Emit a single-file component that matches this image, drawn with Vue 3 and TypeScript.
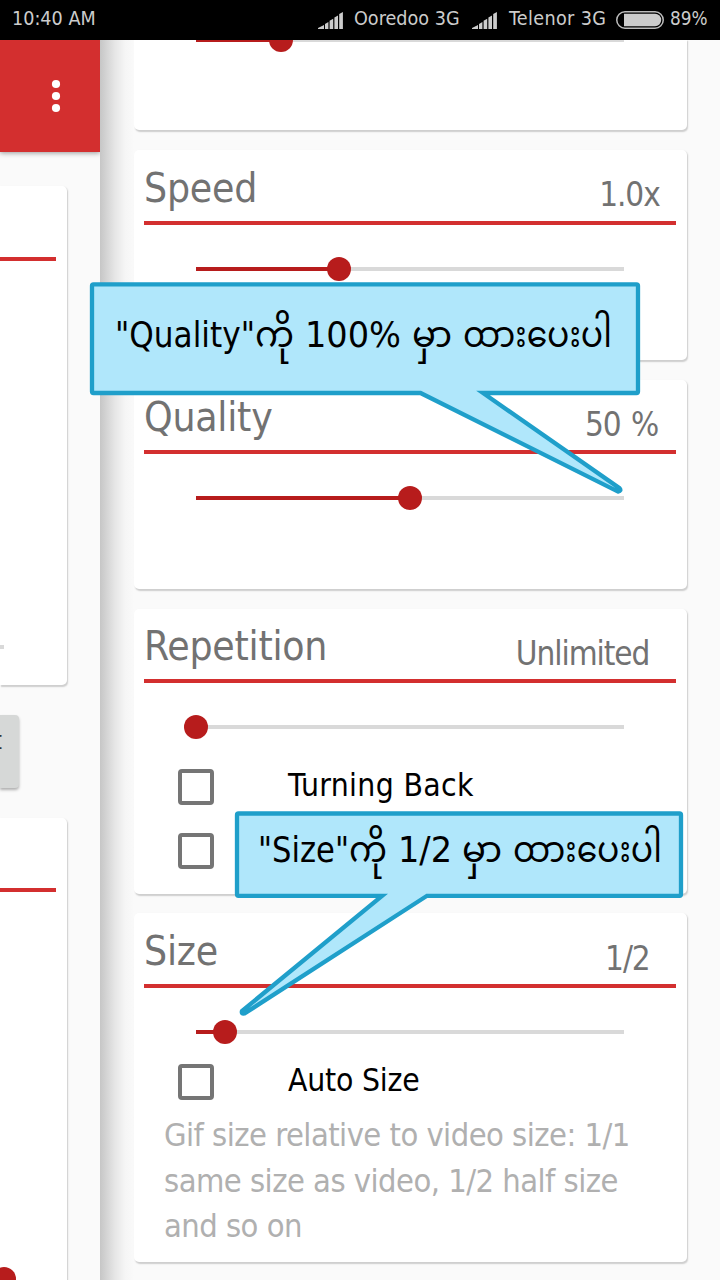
<script setup lang="ts">
interface CheckOption {
  label: string
  tracking: number
}
interface SettingCard {
  title: string
  value: string
  inset: number
  progress: number
  kind: string
  options: CheckOption[]
  hint?: string
}
interface Run {
  text: string
  x: number
  width: number
}
interface Callout {
  name: string
  path: string
  baseline: number
  runs: Run[]
}

const signalBars =
  'M0 17V16L6 13V17zM7 17V11.9L10.4 10.1V17zM11.6 17V8.8L15.2 6.8V17zM16.4 17V5.6L20 3.4V17zM21.2 17V2L24.9 0V17z'

const cards: SettingCard[] = [
  { title: 'Speed', value: '1.0x', inset: 16, progress: 142.5, kind: 'plain', options: [] },
  { title: 'Quality', value: '50 %', inset: 17.5, progress: 214, kind: 'plain', options: [] },
  {
    title: 'Repetition', value: 'Unlimited', inset: 26.3, progress: 0, kind: 'repeat',
    options: [{ label: 'Turning Back', tracking: 0.35 }, { label: '', tracking: 0 }],
  },
  {
    title: 'Size', value: '1/2', inset: 26, progress: 28.5, kind: 'size',
    options: [{ label: 'Auto Size', tracking: -0.2 }],
    hint: 'Gif size relative to video size: 1/1 same size as video, 1/2 half size and so on',
  },
]

const callouts: Callout[] = [
  {
    name: 'quality',
    path: 'M93.5 284.3H636.5Q638 284.3 638 285.8V391.5Q638 393 636.5 393H483L619.5 488.2Q621.8 490.8 618 491.6L420.5 393H93.5Q92 393 92 391.5V285.8Q92 284.3 93.5 284.3Z',
    baseline: 346.5,
    runs: [
      { text: '"Quality"', x: 115, width: 140 },
      { text: 'ကို', x: 255, width: 39 },
      { text: '100%', x: 305, width: 96 },
      { text: 'မှာ', x: 412, width: 40 },
      { text: 'ထားပေးပါ', x: 463, width: 149 },
    ],
  },
  {
    name: 'size',
    path: 'M238.5 813.5H679.5Q681 813.5 681 815V894.3Q681 895.8 679.5 895.8H427L244.5 1013.5Q241 1014.2 242 1011L382 895.8H238.5Q237 895.8 237 894.3V815Q237 813.5 238.5 813.5Z',
    baseline: 861.7,
    runs: [
      { text: '"Size"', x: 258, width: 91 },
      { text: 'ကို', x: 349, width: 38 },
      { text: '1/2', x: 398, width: 54 },
      { text: 'မှာ', x: 462, width: 40 },
      { text: 'ထားပေးပါ', x: 513, width: 149 },
    ],
  },
]
</script>

<template>
  <div class="screen">
    <header class="status">
      <span class="clock">10:40 AM</span>
      <svg class="signal" width="25" height="17" viewBox="0 0 25 17">
        <path :d="signalBars" fill="#ccc" />
      </svg>
      <span class="carrier first">Ooredoo 3G</span>
      <svg class="signal" width="25" height="17" viewBox="0 0 25 17">
        <path :d="signalBars" fill="#ccc" />
      </svg>
      <span class="carrier second">Telenor 3G</span>
      <svg class="battery" width="48" height="18" viewBox="0 0 48 18">
        <rect x=".75" y=".75" width="46.5" height="16.5" rx="8.25" fill="none" stroke="#bbb" stroke-width="1.5" />
        <path d="M8 2.8H39a6.2 6.2 0 0 1 0 12.4H8z" fill="#ccc" />
      </svg>
      <span class="percent">89%</span>
    </header>

    <div class="body">
      <aside class="page">
        <div class="toolbar">
          <svg width="10" height="34" viewBox="0 0 10 34">
            <circle cx="5" cy="5" r="4.1" fill="#fff" />
            <circle cx="5" cy="17" r="4.1" fill="#fff" />
            <circle cx="5" cy="29" r="4.1" fill="#fff" />
          </svg>
        </div>
        <div class="side-card upper">
          <div class="side-rule"></div>
          <div class="side-track"></div>
        </div>
        <div class="side-button"><span>t</span></div>
        <div class="side-card lower">
          <div class="side-rule"></div>
          <div class="side-thumb"></div>
        </div>
      </aside>

      <main class="drawer">
        <section class="card partial">
          <div class="slider">
            <div class="fill" :style="{ width: '85px' }"></div>
            <div class="thumb"></div>
          </div>
        </section>
        <section v-for="card in cards" :key="card.title" class="card" :class="card.kind">
          <div class="heading" :style="{ paddingRight: card.inset + 'px' }">
            <h2>{{ card.title }}</h2>
            <span class="value">{{ card.value }}</span>
          </div>
          <div class="rule"></div>
          <div class="slider">
            <div class="fill" :style="{ width: card.progress + 'px' }"></div>
            <div class="thumb"></div>
          </div>
          <div v-if="card.options.length" class="options">
            <label v-for="(option, i) in card.options" :key="i" class="option">
              <span class="box"></span>
              <span class="name" :style="{ letterSpacing: option.tracking + 'px' }">{{ option.label }}</span>
            </label>
          </div>
          <p v-if="card.hint" class="hint">{{ card.hint }}</p>
        </section>
      </main>
    </div>

    <svg class="callouts" width="720" height="1280" viewBox="0 0 720 1280">
      <g v-for="c in callouts" :key="c.name">
        <path :d="c.path" fill="#b0e7fb" stroke="#1f9fca" stroke-width="4.3" stroke-linejoin="miter" />
        <text
          v-for="run in c.runs"
          :key="run.x"
          :x="run.x"
          :y="c.baseline"
          :textLength="run.width"
          lengthAdjust="spacingAndGlyphs"
        >{{ run.text }}</text>
      </g>
    </svg>
  </div>
</template>

<style>
body {
  margin: 0;
  background: #fafafa;
}
</style>

<style scoped>
.screen {
  position: relative;
  width: 720px;
  height: 1280px;
  overflow: hidden;
  background: #fafafa;
  font-family: "DejaVu Sans Condensed", "DejaVu Sans", "Noto Sans Myanmar", "Noto Sans", sans-serif;
  font-stretch: condensed;
  display: flex;
  flex-direction: column;
}
.status {
  height: 40px;
  flex: none;
  background: #000;
  color: #ccc;
  font-size: 19.6px;
  line-height: 37px;
  display: flex;
  white-space: nowrap;
}
.clock {
  padding-left: 12px;
  width: 306px;
  flex: none;
}
.signal {
  margin-top: 12px;
  flex: none;
}
.carrier {
  padding-left: 11px;
  flex: none;
}
.first {
  width: 118px;
}
.second {
  padding-left: 12px;
  width: 107px;
  letter-spacing: 0.35px;
}
.battery {
  flex: none;
  margin: 11px 6px 0 0;
}
.percent {
  font-size: 18.8px;
}
.body {
  flex: 1;
  min-height: 0;
  display: flex;
}
.page {
  width: 100px;
  flex: none;
  overflow: hidden;
}
.toolbar {
  height: 112px;
  background: #d32f2f;
  box-shadow: 0 1px 5px rgba(0, 0, 0, 0.4);
  display: flex;
  align-items: center;
  justify-content: flex-end;
  padding-right: 39px;
}
.side-card {
  width: 66.5px;
  background: #fff;
  border-radius: 0 5px 5px 0;
  box-shadow: 1px 1.5px 1.5px rgba(0, 0, 0, 0.18);
}
.upper {
  height: 499px;
  margin-top: 34px;
  padding-top: 71px;
  box-sizing: border-box;
}
.side-rule {
  width: 56px;
  height: 4px;
  background: #d32f2f;
}
.side-track {
  width: 4px;
  height: 4px;
  margin-top: 384px;
  background: #d9d9d9;
}
.side-button {
  width: 18.5px;
  height: 72.5px;
  margin: 30px 0 30.5px;
  background: #d6d8d7;
  border-radius: 0 4px 4px 0;
  box-shadow: 0 2px 3px rgba(0, 0, 0, 0.3);
  font-size: 24px;
  line-height: 52px;
  color: #333;
}
.side-button span {
  margin-left: -6.5px;
}
.lower {
  height: 480px;
  padding-top: 70px;
}
.side-thumb {
  width: 24px;
  height: 24px;
  border-radius: 50%;
  background: #b71c1c;
  margin: 375px 0 0 -8px;
}
.drawer {
  width: 620px;
  box-sizing: border-box;
  padding-left: 34px;
  background: linear-gradient(to right, #c6c6c6 0, #d3d3d3 6px, #e6e6e6 15px, #f5f5f5 25px, #fafafa 34px);
}
.card {
  width: 552.7px;
  height: 209.7px;
  margin-bottom: 19.6px;
  box-sizing: border-box;
  background: #fff;
  border-radius: 5px;
  box-shadow: 1px 1.5px 1.5px rgba(0, 0, 0, 0.18);
}
.card.partial {
  height: 90px;
  margin-bottom: 20.3px;
  border-radius: 0 0 5px 5px;
  display: flow-root;
  clip-path: inset(0 -4px -4px 0);
}
.partial .slider {
  margin-top: -12.5px;
}
.card.repeat {
  height: 284.9px;
}
.card.size {
  height: 348.5px;
}
.heading {
  height: 70.3px;
  margin: 0 11px 0 10px;
  display: flex;
  justify-content: space-between;
  color: #727272;
  box-sizing: border-box;
}
h2 {
  margin: 17.5px 0 0;
  font-size: 40.5px;
  line-height: 40px;
  font-weight: 400;
  letter-spacing: -0.25px;
}
.value {
  margin-top: 29.2px;
  font-size: 33px;
  line-height: 32px;
  letter-spacing: -1.05px;
  word-spacing: 2px;
}
.rule {
  height: 4px;
  margin: 0 11px 0 10px;
  background: #d32f2f;
}
.slider {
  width: 428px;
  height: 24px;
  margin: 32px 0 0 62px;
  display: flex;
  align-items: center;
  background: linear-gradient(#d9d9d9, #d9d9d9) center / 100% 4px no-repeat;
}
.fill {
  height: 4px;
  background: #b71c1c;
}
.thumb {
  width: 24px;
  height: 24px;
  margin-left: -12px;
  border-radius: 50%;
  background: #b71c1c;
}
.options {
  padding: 29.5px 0 0 44px;
  display: flex;
  flex-direction: column;
  gap: 28px;
}
.size .options {
  padding-top: 20px;
}
.option {
  display: flex;
  height: 36px;
}
.box {
  width: 36px;
  height: 36px;
  box-sizing: border-box;
  border: 4px solid #757575;
  border-radius: 4px;
  flex: none;
}
.name {
  margin-left: 74px;
  font-size: 31.6px;
  line-height: 32px;
  color: #000;
}
.hint {
  margin: 13.6px 0 0 30px;
  width: 490px;
  font-size: 32.4px;
  line-height: 45.3px;
  letter-spacing: -0.53px;
  color: #b0b0b0;
}
.callouts {
  position: absolute;
  left: 0;
  top: 0;
}
.callouts text {
  font-size: 35.5px;
  fill: #000;
}
</style>
